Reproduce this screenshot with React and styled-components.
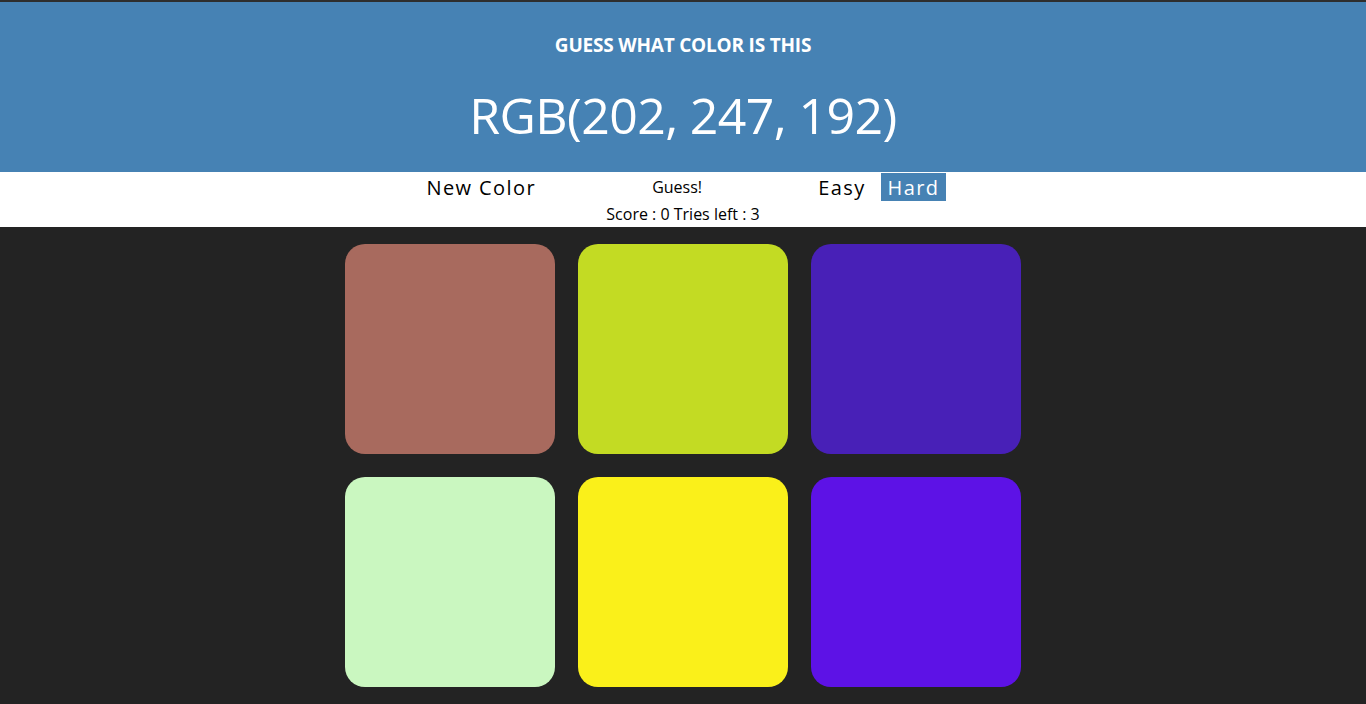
import styled, { createGlobalStyle } from 'styled-components'
import { useState } from 'react'

const GlobalStyle = createGlobalStyle`
    html, body {
        margin: 0;
        padding: 0;
        height: 100%;
        background-color: #232323;
    }
    body {
        font-family: "Open Sans", "Liberation Sans", sans-serif;
        border-top: 2px solid #2e2e2e;
        box-sizing: border-box;
    }
`

const colors = [
    'rgb(168, 106, 94)',
    'rgb(195, 219, 35)',
    'rgb(72, 32, 183)',
    'rgb(202, 247, 192)',
    'rgb(250, 240, 26)',
    'rgb(93, 18, 230)',
]

export default function App(){

    const [mode, setMode] = useState('hard')

    return (
        <>
            <GlobalStyle />
            <Header>
                <Subtitle>GUESS WHAT COLOR IS THIS</Subtitle>
                <Title>RGB(202, 247, 192)</Title>
            </Header>

            <Controls>
                <Bar>
                    <Button>New Color</Button>
                    <Message>Guess!</Message>
                    <Modes>
                        <Button $active={mode === 'easy'} onClick={() => setMode('easy')}>Easy</Button>
                        <Button $active={mode === 'hard'} onClick={() => setMode('hard')}>Hard</Button>
                    </Modes>
                </Bar>
                <Score>Score : 0 Tries left : 3</Score>
            </Controls>

            <Board>
                {colors.map((c) => (
                    <Square key={c} style={{ backgroundColor: c }} />
                ))}
            </Board>
        </>
    )
}

const Header = styled.header`
    background-color: steelblue;
    color: white;
    height: 170px;
    display: flex;
    flex-direction: column;
    align-items: center;
    text-align: center;
`

const Subtitle = styled.h3`
    margin: 30px 0 0;
    font-size: 19px;
    font-weight: 700;
    line-height: 26px;
    letter-spacing: -0.2px;
`

const Title = styled.h1`
    margin: 23px 0 0;
    font-size: 50px;
    font-weight: 400;
    line-height: 68px;
    letter-spacing: -0.6px;
`

const Controls = styled.div`
    background-color: white;
    height: 55px;
    display: flex;
    flex-direction: column;
    align-items: center;
`

const Bar = styled.div`
    width: 527px;
    display: flex;
    justify-content: space-between;
    align-items: center;
    margin-top: 1px;
`

const Button = styled.button`
    border: none;
    outline: none;
    cursor: pointer;
    font-family: inherit;
    font-size: 20px;
    letter-spacing: 1.4px;
    height: 28px;
    padding: 0 7px;
    color: ${(p) => (p.$active ? 'white' : 'black')};
    background-color: ${(p) => (p.$active ? 'steelblue' : 'transparent')};
`

const Message = styled.span`
    font-size: 16px;
    color: black;
`

const Modes = styled.div`
    display: flex;
    gap: 8px;
`

const Score = styled.div`
    font-size: 16px;
    line-height: 26px;
    color: black;
`

const Board = styled.main`
    width: 676px;
    margin: 17px auto 0;
    display: grid;
    grid-template-columns: repeat(3, 210px);
    gap: 23px;
`

const Square = styled.div`
    width: 210px;
    height: 210px;
    border-radius: 20px;
`
